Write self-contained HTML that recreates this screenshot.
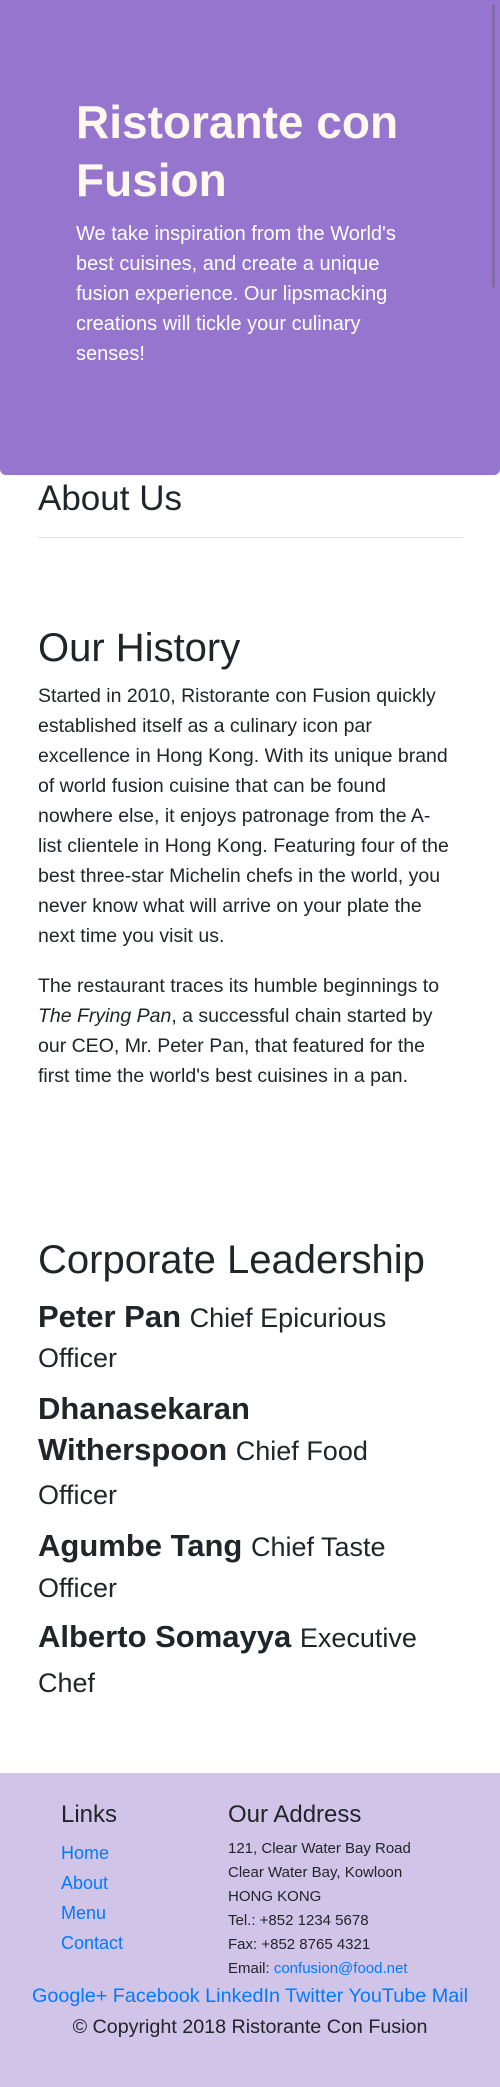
<!DOCTYPE html>
<html><head><meta charset="utf-8"><style>
*{margin:0;padding:0;box-sizing:border-box}
body{width:500px;height:2087px;position:relative;font-family:"Liberation Sans",sans-serif;color:#212529;background:#fff;overflow:hidden}
.a{position:absolute;white-space:nowrap}
.j{position:absolute;left:0;top:0;width:500px;height:475px;background:#9575cd;border-radius:0 0 6px 6px}
.f{position:absolute;left:0;top:1773px;width:500px;height:314px;background:#d1c4e9}
a{color:#007bff;text-decoration:none}
b{font-weight:bold}
</style></head><body>
<div class="j"></div>
<div style="position:absolute;left:492px;top:5px;width:3px;height:282px;background:#7f6aa6"></div>
<div class="a" style="left:76px;top:93px;font-size:46px;line-height:58px;font-weight:bold;color:#fff8ee">Ristorante con<br>Fusion</div>
<div class="a" style="left:76px;top:219px;font-size:20px;line-height:30px;color:#fff">We take inspiration from the World's<br>best cuisines, and create a unique<br>fusion experience. Our lipsmacking<br>creations will tickle your culinary<br>senses!</div>

<div class="a" style="left:38px;top:480px;font-size:35px;line-height:38px">About Us</div>
<div style="position:absolute;left:38px;top:537px;width:425px;height:1px;background:#e0e0e0"></div>

<div class="a" style="left:38px;top:625px;font-size:40px;line-height:46px">Our History</div>
<div class="a" style="left:38px;top:681px;font-size:19.5px;line-height:30px">Started in 2010, Ristorante con Fusion quickly<br>established itself as a culinary icon par<br>excellence in Hong Kong. With its unique brand<br>of world fusion cuisine that can be found<br>nowhere else, it enjoys patronage from the A-<br>list clientele in Hong Kong. Featuring four of the<br>best three-star Michelin chefs in the world, you<br>never know what will arrive on your plate the<br>next time you visit us.</div>
<div class="a" style="left:38px;top:971px;font-size:19.5px;line-height:30px">The restaurant traces its humble beginnings to<br><i>The Frying Pan</i>, a successful chain started by<br>our CEO, Mr. Peter Pan, that featured for the<br>first time the world's best cuisines in a pan.</div>

<div class="a" style="left:38px;top:1238px;font-size:40px;line-height:44px">Corporate Leadership</div>
<div class="a" style="left:38px;top:1297px;font-size:31px;line-height:40px"><b>Peter Pan</b> <span style="font-size:27px">Chief Epicurious</span></div>
<div class="a" style="left:38px;top:1338px;font-size:27px;line-height:40px">Officer</div>
<div class="a" style="left:38px;top:1389px;font-size:31px;line-height:40px"><b>Dhanasekaran</b></div>
<div class="a" style="left:38px;top:1430px;font-size:31px;line-height:40px"><b>Witherspoon</b> <span style="font-size:27px">Chief Food</span></div>
<div class="a" style="left:38px;top:1475px;font-size:27px;line-height:40px">Officer</div>
<div class="a" style="left:38px;top:1526px;font-size:31px;line-height:40px"><b>Agumbe Tang</b> <span style="font-size:27px">Chief Taste</span></div>
<div class="a" style="left:38px;top:1568px;font-size:27px;line-height:40px">Officer</div>
<div class="a" style="left:38px;top:1617px;font-size:31px;line-height:40px"><b>Alberto Somayya</b> <span style="font-size:27px">Executive</span></div>
<div class="a" style="left:38px;top:1663px;font-size:27px;line-height:40px">Chef</div>

<div class="f"></div>
<div class="a" style="left:61px;top:1800px;font-size:24px;line-height:29px">Links</div>
<div class="a" style="left:228px;top:1800px;font-size:24px;line-height:29px">Our Address</div>
<div class="a" style="left:61px;top:1838px;font-size:18px;line-height:30px"><a>Home</a><br><a>About</a><br><a>Menu</a><br><a>Contact</a></div>
<div class="a" style="left:228px;top:1837px;font-size:15px;line-height:24px">121, Clear Water Bay Road<br>Clear Water Bay, Kowloon<br>HONG KONG<br>Tel.: +852 1234 5678<br>Fax: +852 8765 4321<br>Email: <a>confusion@food.net</a></div>
<div class="a" style="left:0;width:500px;text-align:center;top:1981px;font-size:19.8px;line-height:30px"><a>Google+</a> <a>Facebook</a> <a>LinkedIn</a> <a>Twitter</a> <a>YouTube</a> <a>Mail</a></div>
<div class="a" style="left:0;width:500px;text-align:center;top:2012px;font-size:19.7px;line-height:30px">© Copyright 2018 Ristorante Con Fusion</div>
</body></html>
